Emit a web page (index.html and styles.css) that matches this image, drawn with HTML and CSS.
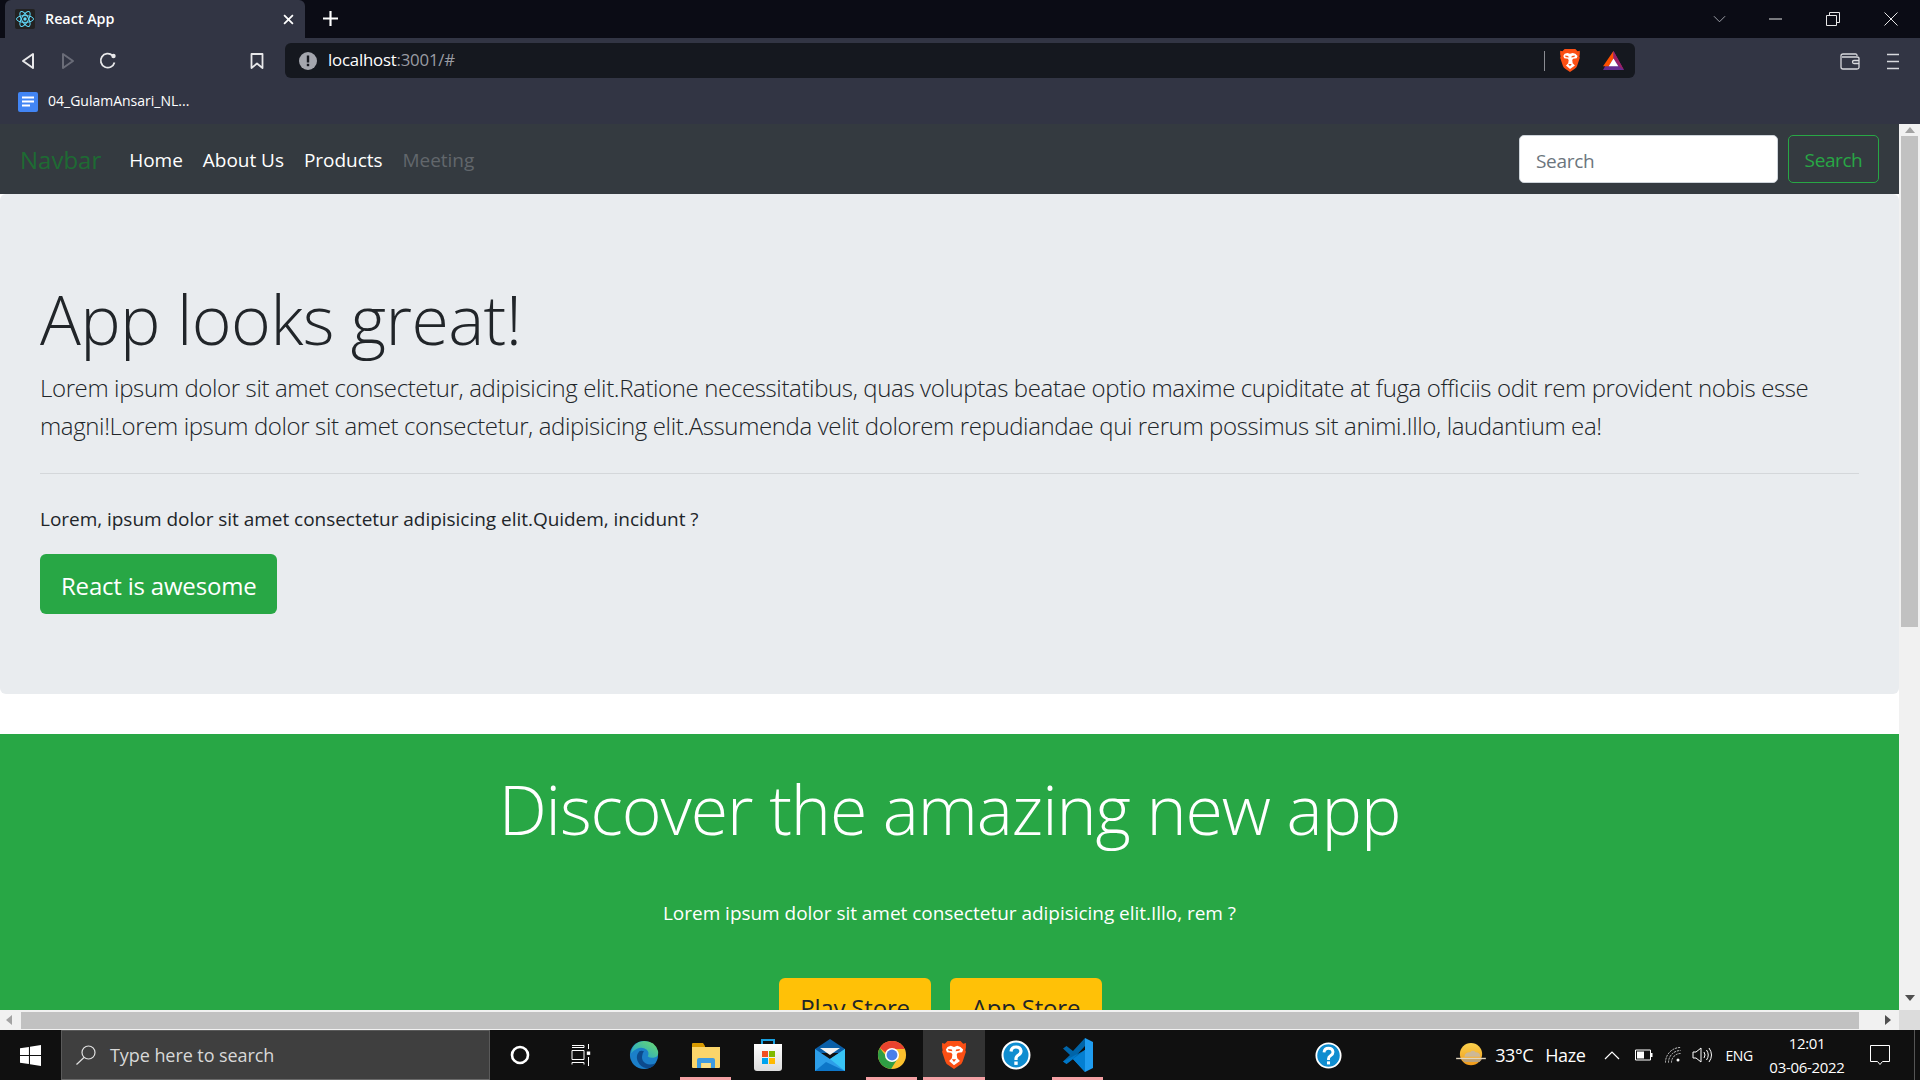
FILE: index.html
```html
<!DOCTYPE html>
<html lang="en">
<head>
  <meta charset="UTF-8">
  <title>React App</title>
  <link rel="stylesheet" href="styles.css">
</head>
<body>
  <svg class="defs" width="0" height="0">
    <symbol id="brave" viewBox="0 0 24 28">
      <path fill="#fb4f14" d="M6 1h12l2.500 2.500L23 3v4l-.5 2.500.5 1.500-3 9q-.5 2-3 3.500L12 27l-5-3.500Q4.500 22 4 20l-3-9 .5-1.500L1 7V3l2.500.5z"/>
      <path fill="#fff" d="M6 6.500l3-1 3 1 3-1 3 1L20.500 9l-1 2.500-4 .5-1 1.500.5 3.500 2.500 2.500L12 23.500 7.500 19.500 10 17l.5-3.500-1-1.500-4-.5-1-2.500z"/>
      <path fill="#fb4f14" d="M6.500 8.500l3.500.5.500 1.500-3.500-.5zM17.500 8.500L14 9l-.5 1.500 3.500-.5zM10 18h4l-2 2.500z"/>
    </symbol>
    <symbol id="help" viewBox="0 0 30 30">
      <circle cx="15" cy="15" r="13.500" fill="#0f8dd0" stroke="#fff" stroke-width="2"/>
      <path fill="none" stroke="#fff" stroke-width="3.200" d="M10 11.500q.5-4.500 5-4.500t5 4q0 2.500-2.500 4T15 18.500v1.500"/>
      <rect x="13.300" y="21.500" width="3.400" height="3.400" fill="#fff"/>
    </symbol>
    <linearGradient id="sun" x1="0" y1="0" x2="0" y2="1">
      <stop offset="0" stop-color="#fbd24e"/>
      <stop offset="1" stop-color="#f09a1a"/>
    </linearGradient>
    <linearGradient id="edge-top" x1="0" y1="1" x2="1" y2="0">
      <stop offset="0" stop-color="#1a9fd8"/>
      <stop offset="1" stop-color="#6fdc6a"/>
    </linearGradient>
    <linearGradient id="bag" x1="0" y1="0" x2="0" y2="1">
      <stop offset="0" stop-color="#ffffff"/>
      <stop offset="1" stop-color="#dcdcdc"/>
    </linearGradient>
  </svg>

  <div class="tabstrip">
    <div class="tab">
      <svg class="favicon" viewBox="0 0 20 20">
        <rect width="20" height="20" rx="2" fill="#222"/>
        <g fill="none" stroke="#61dafb" stroke-width="1">
          <ellipse cx="10" cy="10" rx="8.500" ry="3.400"/>
          <ellipse cx="10" cy="10" rx="8.500" ry="3.400" transform="rotate(60 10 10)"/>
          <ellipse cx="10" cy="10" rx="8.500" ry="3.400" transform="rotate(120 10 10)"/>
        </g>
        <circle cx="10" cy="10" r="1.700" fill="#61dafb"/>
      </svg>
      <span class="tab-title">React App</span>
      <svg class="tab-close" viewBox="0 0 10 10"><path d="M1 1l8 8M9 1l-8 8" stroke="#fff" stroke-width="1.600"/></svg>
    </div>
    <svg class="new-tab" viewBox="0 0 14 14"><path d="M7 0v14M0 7h14" stroke="#fff" stroke-width="2"/></svg>
    <div class="window-controls">
      <svg viewBox="0 0 14 8" class="win-chevron"><path d="M1 1l6 6 6-6" fill="none" stroke="#a9abb3"/></svg>
      <svg viewBox="0 0 14 14" class="win-min"><path d="M0 7h13" stroke="#e6e6e6" stroke-width="1"/></svg>
      <svg viewBox="0 0 14 14" class="win-restore"><path d="M.5 3.500h10v10H.5zM3.500 3V.5h10v10H11" fill="none" stroke="#e6e6e6"/></svg>
      <svg viewBox="0 0 14 14" class="win-close"><path d="M.5.500l13 13M13.500.5l-13 13" stroke="#e6e6e6"/></svg>
    </div>
  </div>

  <div class="toolbar">
    <svg class="tool tool-back" viewBox="0 0 14 18"><path d="M12 2v14L2 9z" fill="none" stroke="#e8e8ea" stroke-width="2" stroke-linejoin="round"/></svg>
    <svg class="tool tool-forward" viewBox="0 0 14 18"><path d="M2 2v14l10-7z" fill="none" stroke="#6a6c78" stroke-width="2" stroke-linejoin="round"/></svg>
    <svg class="tool tool-reload" viewBox="0 0 18 18"><path d="M15.500 10.500a7 7 0 1 1-2-7" fill="none" stroke="#e8e8ea" stroke-width="1.800"/><circle cx="14.500" cy="4" r="2.200" fill="#e8e8ea"/></svg>
    <svg class="tool tool-mark" viewBox="0 0 14 16"><path d="M1.500 1h11v14L7 10.500 1.500 15z" fill="none" stroke="#e8e8ea" stroke-width="1.800" stroke-linejoin="round"/></svg>
    <div class="urlbar">
      <svg class="url-info" viewBox="0 0 18 18"><circle cx="9" cy="9" r="9" fill="#a4a6ae"/><rect x="7.800" y="3.500" width="2.400" height="7" fill="#15181f"/><rect x="7.800" y="11.800" width="2.400" height="2.400" fill="#15181f"/></svg>
      <span class="url-text">localhost<span class="url-dim">:3001/#</span></span>
      <span class="url-divider"></span>
      <svg class="url-brave"><use href="#brave"/></svg>
      <svg class="url-bat" viewBox="0 0 24 22">
        <path fill="#662d91" d="M12 1l11 20H1z"/>
        <path fill="#ff5000" d="M12 1v8l-5 8H1z"/>
        <path fill="#9e1f63" d="M12 1l11 20-5-4-6-8z"/>
        <path fill="#fff" d="M12 9l5 8H7z"/>
      </svg>
    </div>
    <svg class="tool tool-wallet" viewBox="0 0 20 17"><path d="M17 3V2.500q0-1.500-1.500-1.500H3Q1 1 1 3v11q0 2 2 2h14q2 0 2-1.500v-9Q19 4 17 4H2M19 7.500h-5q-1.500 0-1.500 1.500t1.500 1.500h5" fill="none" stroke="#d8d9dd" stroke-width="1.300"/></svg>
    <svg class="tool tool-menu" viewBox="0 0 12 17"><path d="M0 1.500h12M0 8.500h12M0 15.500h12" stroke="#d8d9dd" stroke-width="1.500"/></svg>
  </div>

  <div class="bookmarks">
    <svg class="doc-icon" viewBox="0 0 20 20"><rect width="20" height="20" rx="2" fill="#4285f4"/><path d="M4 5.500h12M4 9.500h12M4 13.500h8" stroke="#fff" stroke-width="2"/></svg>
    <span class="bookmark-name">04_GulamAnsari_NL...</span>
  </div>

  <div class="viewport">
    <div class="page-col">
      <div class="page">
        <nav class="navbar">
          <a class="brand" href="#">Navbar</a>
          <a class="nav-link" href="#">Home</a>
          <a class="nav-link" href="#">About Us</a>
          <a class="nav-link" href="#">Products</a>
          <a class="nav-link disabled" href="#">Meeting</a>
          <form class="nav-form">
            <input class="nav-input" type="text" placeholder="Search">
            <button class="nav-btn" type="button">Search</button>
          </form>
        </nav>
        <section class="jumbotron">
          <h1 class="display">App looks great!</h1>
          <p class="lead">Lorem ipsum dolor sit amet consectetur, adipisicing elit.Ratione necessitatibus, quas voluptas beatae optio maxime cupiditate at fuga officiis odit rem provident nobis esse magni!Lorem ipsum dolor sit amet consectetur, adipisicing elit.Assumenda velit dolorem repudiandae qui rerum possimus sit animi.Illo, laudantium ea!</p>
          <hr class="rule">
          <p class="copy">Lorem, ipsum dolor sit amet consectetur adipisicing elit.Quidem, incidunt ?</p>
          <a class="btn-green" href="#">React is awesome</a>
        </section>
        <section class="discover">
          <h1 class="display">Discover the amazing new app</h1>
          <p class="copy">Lorem ipsum dolor sit amet consectetur adipisicing elit.Illo, rem ?</p>
          <div class="store-btns">
            <a class="btn-yellow" href="#">Play Store</a>
            <a class="btn-yellow" href="#">App Store</a>
          </div>
        </section>
      </div>
    </div>
    <div class="vscroll">
      <span class="arrow arrow-up"></span>
      <span class="vthumb"></span>
      <span class="arrow arrow-down"></span>
    </div>
  </div>

  <div class="hscroll">
    <span class="arrow arrow-left"></span>
    <span class="hthumb"></span>
    <span class="arrow arrow-right"></span>
    <span class="corner"></span>
  </div>

  <div class="taskbar">
    <div class="start">
      <svg class="win-logo" viewBox="0 0 20 20"><path fill="#fff" d="M0 3l8.500-1.200v7.700H0zM9.500 1.600L20 0v9.500H9.500zM0 10.500h8.500v7.700L0 17zM9.500 10.500H20V20L9.500 18.400z"/></svg>
    </div>
    <div class="task-search">
      <svg class="search-icon" viewBox="0 0 20 20"><circle cx="12.500" cy="7.500" r="6.500" fill="none" stroke="#e0e0e0" stroke-width="1.200"/><path d="M8 12.500L.5 19.500" stroke="#e0e0e0" stroke-width="1.200"/></svg>
      <span class="search-hint">Type here to search</span>
    </div>
    <div class="task-btn">
      <svg class="cortana" viewBox="0 0 20 20"><circle cx="10" cy="10" r="8" fill="none" stroke="#fff" stroke-width="2.600"/></svg>
    </div>
    <div class="task-btn">
      <svg class="taskview" viewBox="0 0 20 22"><path d="M1 1.500h12v2M1 3.500h12M1 6.500h12v9H1zM1 20.500v-2h12v2M17.500 0v5M17.500 13v9" fill="none" stroke="#fff" stroke-width="1"/><rect x="15.800" y="7.500" width="3.400" height="3.400" fill="#fff"/></svg>
    </div>
    <div class="task-btn">
      <svg class="app-icon" viewBox="0 0 32 34">
        <circle cx="16" cy="17" r="15" fill="#1b7fc9"/>
        <path fill="url(#edge-top)" d="M2 15Q4 3 16 2q12 0 15 11 1 5-3 6.500-5 1.500-8-1 2-4-1-7-5-4-11-1-4 2-6 5z"/>
        <path fill="#0c4a8c" d="M11 13q-4 5-2 10 3 7 10 8 6 0 9-5-6 2-10 0-5-3-4-8 0-3 2-5-3-1-5 0z"/>
      </svg>
    </div>
    <div class="task-btn running">
      <svg class="app-icon" viewBox="0 0 30 28">
        <path fill="#d89a00" d="M1 3q0-1 1-1h10l2 3v4H1z"/>
        <path fill="#fbd56a" d="M1 6h28v20q0 1-1 1H2q-1 0-1-1z"/>
        <path fill="#3f9be0" d="M6 27v-8q0-2 2-2h14q2 0 2 2v8h-4v-5H10v5z"/>
        <path fill="#fbe08a" d="M11 22h8v5h-8z"/>
      </svg>
    </div>
    <div class="task-btn">
      <svg class="app-icon" viewBox="0 0 30 34">
        <path d="M9 7V2h12v5" fill="none" stroke="#19a0e0" stroke-width="2"/>
        <path fill="url(#bag)" d="M1 6h28v24q0 3-3 3H4q-3 0-3-3z"/>
        <rect x="9" y="13" width="6" height="6" fill="#f25022"/><rect x="16" y="13" width="6" height="6" fill="#7fba00"/>
        <rect x="9" y="20" width="6" height="6" fill="#00a4ef"/><rect x="16" y="20" width="6" height="6" fill="#ffb900"/>
      </svg>
    </div>
    <div class="task-btn">
      <svg class="app-icon mail" viewBox="0 0 30 32">
        <path fill="#0a5fa8" d="M15 0l15 10v4H0v-4z"/>
        <path fill="#f2f2f2" d="M5 9h20l-10 7z"/>
        <path fill="#2d9ee8" d="M0 10l15 10 15-10v22H0z"/>
        <path fill="#38c4f5" d="M30 10v22L15 20z"/>
        <path fill="#0d76c8" d="M0 32l11-9 19 9z"/>
      </svg>
    </div>
    <div class="task-btn running">
      <svg class="app-icon" viewBox="0 0 32 32">
        <circle cx="16" cy="16" r="15" fill="#fbc02d"/>
        <path fill="#e8432e" d="M3 8.500A15 15 0 0 1 29.500 9.500H16a6.500 6.500 0 0 0-6.500 4z"/>
        <path fill="#2f9e44" d="M3 8.500A15 15 0 0 0 15 31l6.500-10.500a6.500 6.500 0 0 1-10-1z"/>
        <circle cx="16" cy="16" r="7.500" fill="#fff"/>
        <circle cx="16" cy="16" r="5.800" fill="#4a7fe8"/>
      </svg>
    </div>
    <div class="task-btn running active">
      <svg class="app-brave"><use href="#brave"/></svg>
    </div>
    <div class="task-btn">
      <svg class="app-help"><use href="#help"/></svg>
    </div>
    <div class="task-btn running">
      <svg class="app-icon" viewBox="0 0 30 34">
        <path fill="#1f9cf0" d="M22 0l8 4v26l-8 4-12-13 12-9z"/>
        <path fill="#0065a9" d="M22 0v8L10 21 3.500 26 0 23.500 7 17 0 10.500 3.500 8 10 13z"/>
        <path fill="#007acc" d="M22 26v8L10 21l-6.500 5L0 23.500 22 12z" opacity=".85"/>
      </svg>
    </div>

    <div class="tray-help"><svg class="app-tray-help"><use href="#help"/></svg></div>

    <div class="tray">
      <svg class="weather" viewBox="0 0 32 28">
        <circle cx="16" cy="13" r="12" fill="url(#sun)"/>
        <path fill="#cdb896" d="M9 16q0-5 6-5 3-3 6 0 5 0 5 5z"/>
        <path fill="#e2d6bf" d="M0 17h32v1.500H0z"/>
        <path fill="#b9a27f" d="M6 18.500h22l-3 3H9z"/>
      </svg>
      <span class="tray-temp">33°C</span>
      <span class="tray-haze">Haze</span>
      <svg class="tray-chevron" viewBox="0 0 16 10"><path d="M1 9l7-7 7 7" fill="none" stroke="#fff" stroke-width="1.200"/></svg>
      <svg class="tray-battery" viewBox="0 0 18 12"><path d="M.5 1h15v10H.5z" fill="none" stroke="#fff"/><path d="M2 2.500h7v7H2z" fill="#fff"/><rect x="16" y="4" width="1.500" height="4" fill="#fff"/></svg>
      <svg class="tray-wifi" viewBox="0 0 16 16"><path d="M.5 15.500a15 15 0 0 1 15-15M3.500 15.500a12 12 0 0 1 12-12M6.500 15.500a9 9 0 0 1 9-9" fill="none" stroke="#cfcfcf" stroke-dasharray="2 1"/><circle cx="13" cy="13" r="1.500" fill="#fff"/></svg>
      <svg class="tray-sound" viewBox="0 0 20 18"><path d="M1 6h3l5-4v14l-5-4H1zM12 6q2 3 0 6M14.500 4q3.500 5 0 10M17 2q5 7 0 14" fill="none" stroke="#fff"/></svg>
      <span class="tray-lang">ENG</span>
      <div class="clock"><span>12:01</span><span>03-06-2022</span></div>
      <svg class="tray-notify" viewBox="0 0 20 21"><path d="M.5.500h19v16h-7l-2.500 3-2.500-3h-7z" fill="none" stroke="#fff"/></svg>
    </div>
    <span class="show-desktop"></span>
  </div>
</body>
</html>
```

FILE: styles.css
```css
* {
  box-sizing: border-box;
}
html, body {
  height: 100%;
}
body {
  margin: 0;
  display: flex;
  flex-direction: column;
  overflow: hidden;
  font-family: "Open Sans", sans-serif;
  color: #212529;
}
a {
  text-decoration: none;
}
.defs {
  position: absolute;
}

/* browser chrome */
.tabstrip {
  height: 38px;
  flex: none;
  display: flex;
  align-items: flex-end;
  padding-left: 5px;
  background: #0b0c15;
}
.tab {
  width: 300px;
  height: 38px;
  display: flex;
  align-items: center;
  padding: 0 10px;
  background: #323544;
  border-radius: 6px 6px 0 0;
}
.favicon {
  width: 20px;
  height: 20px;
  margin-right: 10px;
}
.tab-title {
  flex: 1;
  margin-top: -2px;
  font-size: 14.300px;
  font-weight: 600;
  color: #fff;
}
.tab-close {
  width: 11px;
  height: 11px;
  margin-right: 1px;
}
.new-tab {
  width: 15px;
  height: 15px;
  margin: 0 0 12px 18px;
}
.window-controls {
  margin-left: auto;
  align-self: stretch;
  display: flex;
  align-items: center;
  padding-right: 22px;
}
.win-chevron {
  width: 13px;
  height: 8px;
  margin-right: 43px;
}
.win-min {
  width: 14px;
  height: 14px;
  margin-right: 43px;
}
.win-restore {
  width: 14px;
  height: 14px;
  margin-right: 44px;
}
.win-close {
  width: 14px;
  height: 14px;
}
.toolbar {
  height: 47px;
  flex: none;
  display: flex;
  align-items: flex-start;
  padding-top: 5px;
  background: #323544;
}
.tool {
  margin-top: 9px;
  flex: none;
}
.tool-back {
  width: 14px;
  height: 18px;
  margin-left: 21px;
}
.tool-forward {
  width: 14px;
  height: 18px;
  margin-left: 26px;
  margin-top: 9px;
}
.tool-reload {
  width: 18px;
  height: 18px;
  margin-left: 24px;
}
.tool-mark {
  width: 14px;
  height: 16px;
  margin: 10px 0 0 133px;
}
.urlbar {
  width: 1350px;
  height: 35px;
  margin-left: 21px;
  display: flex;
  align-items: center;
  padding: 0 10px 0 14px;
  background: #15181f;
  border-radius: 6px;
}
.url-info {
  width: 18px;
  height: 18px;
  margin-right: 11px;
}
.url-text {
  flex: 1;
  margin-top: -2px;
  font-size: 16.800px;
  letter-spacing: -0.2px;
  color: #fff;
}
.url-dim {
  color: #9a9ca3;
}
.url-divider {
  width: 1px;
  height: 20px;
  background: #8a8c92;
  margin-right: 14px;
}
.url-brave {
  width: 22px;
  height: 25px;
  margin-right: 21px;
}
.url-bat {
  width: 23px;
  height: 21px;
}
.tool-wallet {
  width: 20px;
  height: 17px;
  margin: 10px 0 0 205px;
}
.tool-menu {
  width: 12px;
  height: 17px;
  margin: 10px 0 0 27px;
}
.bookmarks {
  height: 39px;
  flex: none;
  display: flex;
  align-items: center;
  padding: 0 0 6px 18px;
  background: #323544;
}
.doc-icon {
  width: 20px;
  height: 20px;
  margin-right: 10px;
}
.bookmark-name {
  margin-top: -2px;
  font-size: 14px;
  color: #fff;
}

/* page */
.viewport {
  flex: 1;
  min-height: 0;
  display: flex;
}
.page-col {
  flex: 1;
  min-width: 0;
}
.page {
  height: 100%;
  overflow: hidden;
  background: #fff;
}
.navbar {
  height: 70px;
  display: flex;
  align-items: center;
  padding: 0 20px;
  background: #343a40;
}
.brand {
  margin-right: 18px;
  font-size: 24px;
  color: #1e6b33;
}
.nav-link {
  padding: 1px 10px 0;
  font-size: 19px;
  letter-spacing: -0.03px;
  color: #fff;
}
.nav-link.disabled {
  color: #62676c;
}
.nav-form {
  margin-left: auto;
  display: flex;
  gap: 10px;
}
.nav-input {
  width: 259px;
  height: 48px;
  padding: 3px 16px 0;
  font: 19px "Open Sans", sans-serif;
  letter-spacing: -0.3px;
  background: #fff;
  border: 1px solid #ced4da;
  border-radius: 5px;
}
.nav-input::placeholder {
  color: #6c757d;
}
.nav-btn {
  width: 91px;
  height: 48px;
  padding: 1px 0 0;
  font: 19px "Open Sans", sans-serif;
  letter-spacing: -0.4px;
  color: #28a745;
  background: transparent;
  border: 1px solid #28a745;
  border-radius: 5px;
}
.jumbotron {
  padding: 80px 40px;
  margin-bottom: 40px;
  background: #e9ecef;
  border-radius: 6px;
}
.display {
  margin: 0;
  font-size: 68px;
  line-height: 84px;
  font-weight: 300;
  letter-spacing: -1.05px;
}
.jumbotron .display {
  padding-top: 3px;
  margin-bottom: -3px;
  letter-spacing: -0.6px;
}
.lead {
  margin: 11px 0 -1px;
  font-size: 24px;
  line-height: 37.500px;
  font-weight: 300;
  letter-spacing: -0.37px;
}
.rule {
  margin: 30px 0;
  height: 1px;
  border: 0;
  background: #d4d7da;
}
.copy {
  margin: 0 0 20px;
  font-size: 19px;
  line-height: 30px;
  letter-spacing: -0.03px;
}
.btn-green {
  display: inline-block;
  padding: 12px 21px 8px;
  font-size: 24px;
  line-height: 39.500px;
  letter-spacing: -0.2px;
  color: #fff;
  background: #28a745;
  border-radius: 6px;
}
.discover {
  padding: 33px 0 0;
  text-align: center;
  color: #fff;
  background: #28a745;
}
.discover .copy {
  margin: 47px 0 50px;
}
.store-btns {
  display: flex;
  justify-content: center;
  gap: 19px;
  padding-right: 18px;
}
.btn-yellow {
  width: 152px;
  height: 60px;
  font-size: 24px;
  line-height: 60px;
  letter-spacing: -0.2px;
  color: #212529;
  background: #ffc107;
  border-radius: 6px;
}

/* scrollbars */
.vscroll {
  width: 21px;
  flex: none;
  display: flex;
  flex-direction: column;
  align-items: center;
  background: #f1f1f1;
}
.vthumb {
  width: 17px;
  height: 491px;
  background: #c1c1c1;
  margin: 3px 0 auto;
}
.hscroll {
  height: 20px;
  flex: none;
  display: flex;
  align-items: center;
  background: #f1f1f1;
}
.hthumb {
  width: 1838px;
  height: 17px;
  margin-left: 9px;
  background: #c1c1c1;
}
.corner {
  width: 21px;
  height: 100%;
  margin-left: 8px;
  background: #dcdcdc;
}
.arrow {
  display: block;
  flex: none;
  width: 0;
  height: 0;
  border: 5px solid transparent;
}
.arrow-up {
  margin-top: 3px;
  border-top: 0;
  border-bottom: 6px solid #a3a3a3;
}
.arrow-down {
  margin-bottom: 9px;
  border-bottom: 0;
  border-top: 6px solid #505050;
}
.arrow-left {
  margin-left: 6px;
  border-left: 0;
  border-right: 6px solid #a3a3a3;
}
.arrow-right {
  margin-left: 26px;
  border-right: 0;
  border-left: 6px solid #505050;
}

/* taskbar */
.taskbar {
  height: 50px;
  flex: none;
  display: flex;
  align-items: stretch;
  background: #101010;
}
.start {
  width: 61px;
  display: flex;
  align-items: center;
  justify-content: center;
}
.win-logo {
  width: 21px;
  height: 21px;
}
.task-search {
  width: 429px;
  margin-right: -1px;
  display: flex;
  align-items: center;
  padding-left: 14px;
  background: #3f3f3f;
  border: 1px solid #5a5a5a;
  border-bottom-color: #6a6a6a;
}
.search-icon {
  width: 20px;
  height: 22px;
  margin-right: 14px;
}
.search-hint {
  font-size: 18px;
  letter-spacing: -0.07px;
  color: #d8d8d8;
}
.task-btn {
  width: 62px;
  display: flex;
  align-items: center;
  justify-content: center;
  position: relative;
}
.task-btn.running::after {
  content: "";
  position: absolute;
  left: 5px;
  right: 6px;
  bottom: 0;
  height: 3px;
  background: #f4a0a4;
}
.task-btn.active {
  background: #333;
}
.task-btn.active::after {
  left: 0;
  right: 0;
}
.cortana {
  width: 20px;
  height: 20px;
}
.taskview {
  width: 20px;
  height: 22px;
  margin-right: 3px;
}
.app-icon {
  width: 30px;
  height: 34px;
}
.app-brave {
  width: 26px;
  height: 34px;
}
.app-help {
  width: 30px;
  height: 30px;
}
.tray-help {
  display: flex;
  align-items: center;
  margin-left: 206px;
}
.app-tray-help {
  width: 27px;
  height: 27px;
}
.tray {
  margin-left: auto;
  display: flex;
  align-items: center;
  color: #fff;
  padding-right: 24px;
}
.weather {
  width: 30px;
  height: 26px;
  margin-right: 9px;
}
.tray-temp, .tray-haze {
  font-size: 18px;
  letter-spacing: -0.4px;
}
.tray-haze {
  margin: 0 19px 0 12px;
}
.tray-chevron {
  width: 16px;
  height: 10px;
  margin-right: 15px;
}
.tray-battery {
  width: 18px;
  height: 12px;
  margin-right: 12px;
}
.tray-wifi {
  width: 16px;
  height: 16px;
  margin-right: 11px;
}
.tray-sound {
  width: 20px;
  height: 18px;
  margin-right: 13px;
}
.tray-lang {
  font-size: 14px;
  letter-spacing: -0.3px;
  margin-right: 12px;
}
.clock {
  width: 84px;
  display: flex;
  flex-direction: column;
  align-items: center;
  font-size: 15px;
  line-height: 24px;
  letter-spacing: -0.3px;
  margin-right: 21px;
}
.tray-notify {
  width: 20px;
  height: 21px;
}
.show-desktop {
  width: 6px;
  border-left: 1px solid #555;
}
```
